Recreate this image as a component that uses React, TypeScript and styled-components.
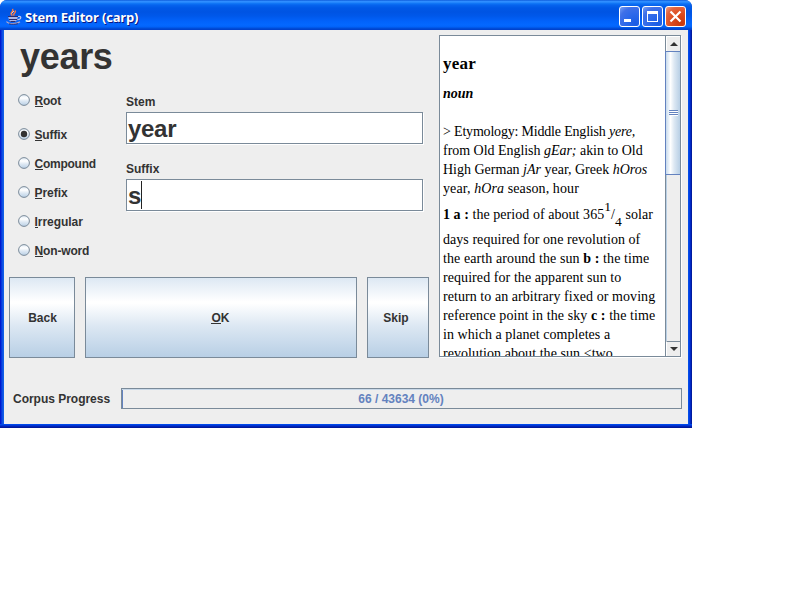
import React from "react";
import styled, { createGlobalStyle } from "styled-components";

const GlobalStyle = createGlobalStyle`
  * { box-sizing: border-box; }
  html, body { margin: 0; padding: 0; background: #fff; overflow: hidden; }
`;

const Window = styled.div`
  width: 692px;
  height: 428px;
  display: flex;
  flex-direction: column;
  background: linear-gradient(90deg, #0019cf 0, #0019cf 1px, #0040e0 1px, #0831d9 2px, #166aee 3px, #0855dd 4px, #0855dd 688px, #0046f0 689px, #0030d8 690px, #00138c 692px);
  border-radius: 7px 7px 0 0;
  overflow: hidden;
  font-family: "Liberation Sans", Arial, sans-serif;
  font-weight: bold;
  font-size: 12px;
  color: #333;
`;

const TitleBar = styled.header`
  height: 30px;
  flex: none;
  display: flex;
  align-items: center;
  padding: 3px 6px 0 6px;
  background: linear-gradient(180deg, #0a4fd0 0, #2a8cff 1px, #3490ff 2px, #147cf8 3px, #0664ee 5px, #0058e6 8px, #0054e3 12px, #0058ea 16px, #0262fa 21px, #0468ff 25px, #0262f8 27px, #0050dc 28px, #003dc8 30px);
`;

const TitleText = styled.h1`
  flex: 1;
  margin: 1px 0 0 3px;
  font: bold 13px/18px "Open Sans", "Noto Sans", sans-serif;
  letter-spacing: -0.18px;
  color: #fff;
  text-shadow: 1px 1px 0 #0a1883;
`;

const WindowButtons = styled.div`
  display: flex;
  gap: 2px;
`;

const WindowButton = styled.button<{ $close?: boolean }>`
  width: 21px;
  height: 21px;
  padding: 0;
  border: 1px solid #fff;
  border-radius: 3px;
  background: ${(p) =>
    p.$close
      ? "radial-gradient(circle at 80% 85%, #c8380c 0, #dc4c20 45%, #e4653f 75%, #f0a088 100%)"
      : "radial-gradient(circle at 80% 85%, #1a5ce4 0, #2c68ea 40%, #3f70e8 72%, #7ba2f4 100%)"};
  svg { display: block; }
`;

const Client = styled.main`
  flex: 1;
  margin: 0 4px;
  background: #eee;
  display: flex;
  flex-direction: column;
`;

const BottomBorder = styled.div`
  height: 4px;
  flex: none;
  background: linear-gradient(180deg, #0050ee 0, #0040e4 1px, #0028c4 2px, #00138c 4px);
`;

const Upper = styled.div`
  display: flex;
  height: 329px;
  padding: 5px 6px 0 5px;
  gap: 10px;
`;

const Editor = styled.section`
  width: 420px;
  flex: none;
`;

const Word = styled.h2`
  margin: 0;
  height: 60px;
  padding-left: 11px;
  font-size: 36px;
  line-height: 43px;
  letter-spacing: -0.3px;
`;

const Form = styled.div`
  display: flex;
  height: 182px;
`;

const Choices = styled.div`
  width: 117px;
  padding-left: 9px;
  display: flex;
  flex-direction: column;
`;

const Choice = styled.label<{ $first?: boolean }>`
  display: flex;
  align-items: center;
  gap: 4.5px;
  height: 12px;
  margin: ${(p) => (p.$first ? "-1px 0 22px" : "0 0 17px")};
  white-space: nowrap;
  svg { flex: none; display: block; }
`;

const Caption = styled.span<{ $spacing: number }>`
  letter-spacing: ${(p) => p.$spacing}px;
  line-height: 14px;
  padding-top: 2px;
`;

const Mnemonic = styled.span`
  display: inline-block;
  height: 13px;
  border-bottom: 1px solid #333;
`;

const Fields = styled.div`
  width: 297px;
`;

const Field = styled.div`
  height: 67px;
`;

const FieldLabel = styled.div`
  height: 17px;
  line-height: 15px;
`;

const Input = styled.div`
  height: 32px;
  display: flex;
  align-items: center;
  padding: 1px 0 0 1px;
  background: #fff;
  border: 1px solid #7a8a99;
  box-shadow: 1px 1px 0 #fff;
  font-size: 24px;
  line-height: 28px;
  letter-spacing: -0.3px;
`;

const Caret = styled.span`
  width: 1px;
  height: 28px;
  margin: -1px 0 0;
  background: #222;
`;

const Actions = styled.div`
  display: grid;
  grid-template-columns: 66px 272px 62px;
  gap: 10px;
`;

const ActionButton = styled.button<{ $inset?: string }>`
  height: 81px;
  padding: ${(p) => p.$inset ?? "0 1px 0 0"};
  border: 1px solid #7a8a99;
  background: linear-gradient(180deg, #dde8f3 0, #fff 30%, #fff 32%, #dde8f3 60%, #b8cfe5 100%);
  color: #333;
  font: inherit;
`;

const Pane = styled.section`
  width: 242px;
  height: 322px;
  display: flex;
  background: #fff;
  border: 1px solid #7a8a99;
  box-shadow: 1px 1px 0 #fff;
`;

const Article = styled.article`
  flex: 1;
  overflow: hidden;
  padding-left: 3px;
  font: 14px/19px "Liberation Serif", "Times New Roman", serif;
  color: #000;
`;

const Headword = styled.h3`
  margin: 18px 0 11px;
  font-size: 17px;
  line-height: 19px;
  letter-spacing: 0.25px;
`;

const PartOfSpeech = styled.h4`
  margin: 0 0 19px;
  font-size: 14px;
  line-height: 19px;
  font-style: italic;
`;

const Line = styled.div<{ $tall?: boolean; $spacing?: number }>`
  height: ${(p) => (p.$tall ? 32 : 19)}px;
  line-height: ${(p) => (p.$tall ? 33 : 19)}px;
  letter-spacing: ${(p) => p.$spacing ?? 0}px;
  white-space: pre;
  sup, sub { font-size: 13.5px; line-height: 0; }
  sup { vertical-align: 8px; }
  sub { vertical-align: -7px; }
`;

const Scrollbar = styled.div`
  width: 15px;
  flex: none;
  display: flex;
  flex-direction: column;
  border-left: 1px solid #7a8a99;
  background: #eee;
`;

const ScrollArrow = styled.div<{ $down?: boolean }>`
  height: 15px;
  display: flex;
  align-items: center;
  justify-content: center;
  border-left: 1px solid #fff;
  border-top: 1px solid ${(p) => (p.$down ? "#7a8a99" : "#fff")};
`;

const Track = styled.div`
  flex: 1;
  border-left: 1px solid #b8cfe5;
`;

const Thumb = styled.div`
  height: 124px;
  margin-left: -2px;
  border: 1px solid #6382bf;
  border-right: 0;
  background: linear-gradient(90deg, #c8dbed 0, #fff 32%, #dde8f3 58%, #b8cfe5 100%);
  display: flex;
  justify-content: center;
  align-items: center;
`;

const Lower = styled.div`
  display: flex;
  height: 21px;
  margin-top: 29px;
  padding: 0 6px 0 9px;
`;

const ProgressLabel = styled.div`
  width: 108px;
  line-height: 23px;
  letter-spacing: -0.02px;
`;

const ProgressBar = styled.div`
  flex: 1;
  display: flex;
  align-items: center;
  justify-content: center;
  padding-right: 1px;
  border: 1px solid #7a8a99;
  box-shadow: inset 0 1px 0 #c8d8e8, inset 1px 0 0 #6382bf;
  color: #6382bf;
`;

function JavaIcon() {
  return (
    <svg width="16" height="17" viewBox="0 0 16 17" fill="none" aria-hidden="true">
      <path d="M6.5 7.5C2.5 5 8.5 4 6.5.8M8.3 7.5C6 5.5 11 5 9 2.5" stroke="#f07848" strokeWidth="1.5" />
      <path d="M5.5 5.5L8 3" stroke="#ffc8a8" />
      <path d="M2 8h10l-1 4-2 2H5l-2-2z" fill="#aeb6e6" />
      <path d="M2 8.5h10M3 11.5h8.5M4.5 13.5h5" stroke="#2b2c70" strokeWidth="1.2" />
      <path d="M12 8.5c4-.8 3.6 3-.6 3.2" stroke="#c2c8ec" strokeWidth="1.2" />
      <path d="M.5 13.5C2 16.3 11 16.3 14 13.7" stroke="#b9a9c4" strokeWidth="1.2" />
      <path d="M3 15.9c3 .6 6 .5 9-.2" stroke="#28307c" />
    </svg>
  );
}

function RadioMark({ checked }: { checked?: boolean }) {
  return (
    <svg width="12" height="12" viewBox="0 0 12 12" aria-hidden="true">
      <defs>
        <linearGradient id="metal" x1="0" y1="0" x2="0" y2="1">
          <stop offset="0" stopColor="#dde8f3" />
          <stop offset=".32" stopColor="#fff" />
          <stop offset=".6" stopColor="#dde8f3" />
          <stop offset="1" stopColor="#b8cfe5" />
        </linearGradient>
      </defs>
      <circle cx="6" cy="6" r="5.4" fill="url(#metal)" stroke="#7a8a99" />
      {checked && <circle cx="6" cy="6" r="3.2" fill="#333" />}
    </svg>
  );
}

const choices = [
  { label: "Root", spacing: -0.2 },
  { label: "Suffix", spacing: -0.15, checked: true },
  { label: "Compound", spacing: -0.25 },
  { label: "Prefix", spacing: -0.05 },
  { label: "Irregular", spacing: -0.05 },
  { label: "Non-word", spacing: -0.15 },
];

export default function App() {
  return (
    <>
      <GlobalStyle />
      <Window>
        <TitleBar>
          <JavaIcon />
          <TitleText>Stem Editor (carp)</TitleText>
          <WindowButtons>
            <WindowButton aria-label="Minimize">
              <svg width="19" height="19"><path d="M4 12h7v3H4z" fill="#fff" /></svg>
            </WindowButton>
            <WindowButton aria-label="Maximize">
              <svg width="19" height="19"><path d="M4 4h11v11H4zM5 7v7h9V7z" fill="#fff" fillRule="evenodd" /></svg>
            </WindowButton>
            <WindowButton $close aria-label="Close">
              <svg width="19" height="19"><path d="M4.5 4.5l10 10M14.5 4.5l-10 10" stroke="#fff" strokeWidth="2.2" /></svg>
            </WindowButton>
          </WindowButtons>
        </TitleBar>
        <Client>
          <Upper>
            <Editor>
              <Word>years</Word>
              <Form>
                <Choices>
                  {choices.map((c, i) => (
                    <Choice key={c.label} $first={i === 0}>
                      <RadioMark checked={c.checked} />
                      <Caption $spacing={c.spacing}>
                        <Mnemonic>{c.label[0]}</Mnemonic>
                        {c.label.slice(1)}
                      </Caption>
                    </Choice>
                  ))}
                </Choices>
                <Fields>
                  <Field>
                    <FieldLabel>Stem</FieldLabel>
                    <Input>year</Input>
                  </Field>
                  <Field>
                    <FieldLabel>Suffix</FieldLabel>
                    <Input>s<Caret /></Input>
                  </Field>
                </Fields>
              </Form>
              <Actions>
                <ActionButton $inset="0 0 0 1px">Back</ActionButton>
                <ActionButton><Mnemonic>O</Mnemonic>K</ActionButton>
                <ActionButton $inset="0 4px 0 0">Skip</ActionButton>
              </Actions>
            </Editor>
            <Pane>
              <Article>
                <Headword>year</Headword>
                <PartOfSpeech>noun</PartOfSpeech>
                <Line $spacing={-0.19}>&gt; Etymology: Middle English <i>yere,</i></Line>
                <Line $spacing={-0.03}>from Old English <i>gEar;</i> akin to Old</Line>
                <Line>High German <i>jAr</i> year, Greek <i>hOros</i></Line>
                <Line $spacing={0.1}>year, <i>hOra</i> season, hour</Line>
                <Line $tall $spacing={0.05}><b>1 a :</b> the period of about 365<sup>1</sup>/<sub>4</sub> solar</Line>
                <Line $spacing={0.05}>days required for one revolution of</Line>
                <Line $spacing={0.09}>the earth around the sun <b>b :</b> the time</Line>
                <Line $spacing={0.07}>required for the apparent sun to</Line>
                <Line $spacing={0.06}>return to an arbitrary fixed or moving</Line>
                <Line $spacing={0.08}>reference point in the sky <b>c :</b> the time</Line>
                <Line $spacing={0.04}>in which a planet completes a</Line>
                <Line $spacing={0.06}>revolution about the sun &lt;two</Line>
              </Article>
              <Scrollbar>
                <ScrollArrow>
                  <svg width="8" height="4"><path d="M0 4L4 0l4 4z" fill="#333" /></svg>
                </ScrollArrow>
                <Track>
                  <Thumb>
                    <svg width="9" height="6"><path d="M0 .5h9M0 2.5h9M0 4.5h9" stroke="#6382bf" /><path d="M1 1.5h8M1 3.5h8M1 5.5h8" stroke="#fff" /></svg>
                  </Thumb>
                </Track>
                <ScrollArrow $down>
                  <svg width="8" height="4"><path d="M0 0h8L4 4z" fill="#333" /></svg>
                </ScrollArrow>
              </Scrollbar>
            </Pane>
          </Upper>
          <Lower>
            <ProgressLabel>Corpus Progress</ProgressLabel>
            <ProgressBar>66 / 43634 (0%)</ProgressBar>
          </Lower>
        </Client>
        <BottomBorder />
      </Window>
    </>
  );
}
